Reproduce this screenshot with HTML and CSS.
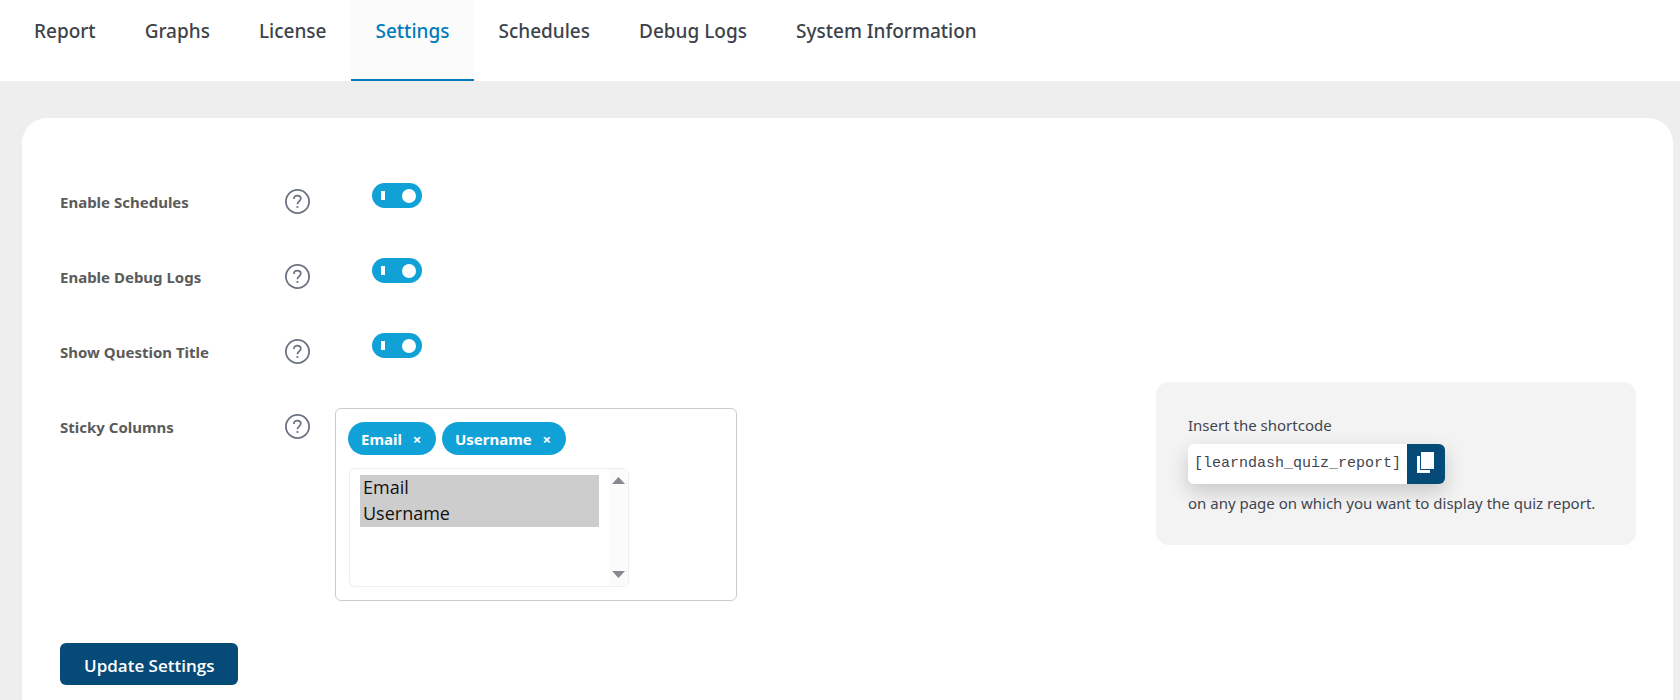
FILE: index.html
```html
<!DOCTYPE html>
<html lang="en">
<head>
<meta charset="utf-8">
<meta name="viewport" content="width=device-width, initial-scale=1">
<title>Quiz Report Settings</title>
<link rel="stylesheet" href="styles.css">
</head>
<body>
<svg class="sprite" aria-hidden="true">
  <symbol id="help" viewBox="0 0 25 25">
    <circle cx="12.5" cy="12.5" r="11.6" fill="none" stroke="#6b7280" stroke-width="1.800"/>
    <path d="M8.9 9.9C8.9 7.7 10.4 6.6 12.3 6.6c2 0 3.5 1.1 3.5 2.9 0 2.600-3.400 3-3.400 5.700" fill="none" stroke="#6b7280" stroke-width="1.700"/>
    <circle cx="12.400" cy="18" r="1.100" fill="#6b7280"/>
  </symbol>
</svg>
<nav class="tabs">
  <a class="tab" href="#report">Report</a>
  <a class="tab" href="#graphs">Graphs</a>
  <a class="tab" href="#license">License</a>
  <a class="tab tab-active" href="#settings" aria-current="page">Settings</a>
  <a class="tab" href="#schedules">Schedules</a>
  <a class="tab" href="#logs">Debug Logs</a>
  <a class="tab" href="#system">System Information</a>
</nav>
<main class="card">
  <form class="settings">
    <div class="row">
      <label class="label" for="schedules-on">Enable Schedules</label>
      <button class="help" type="button" aria-label="Help"><svg><use href="#help"/></svg></button>
      <input class="toggle" id="schedules-on" type="checkbox" checked>
    </div>
    <div class="row">
      <label class="label" for="logs-on">Enable Debug Logs</label>
      <button class="help" type="button" aria-label="Help"><svg><use href="#help"/></svg></button>
      <input class="toggle" id="logs-on" type="checkbox" checked>
    </div>
    <div class="row">
      <label class="label" for="title-on">Show Question Title</label>
      <button class="help" type="button" aria-label="Help"><svg><use href="#help"/></svg></button>
      <input class="toggle" id="title-on" type="checkbox" checked>
    </div>
    <div class="row">
      <label class="label" for="columns">Sticky Columns</label>
      <button class="help" type="button" aria-label="Help"><svg><use href="#help"/></svg></button>
      <div class="picker">
        <div class="pills">
          <span class="pill">Email <button class="remove" type="button" aria-label="Remove Email">×</button></span>
          <span class="pill">Username <button class="remove" type="button" aria-label="Remove Username">×</button></span>
        </div>
        <div class="listbox">
          <select class="list" id="columns" multiple size="4">
            <option selected>Email</option>
            <option selected>Username</option>
          </select>
          <div class="scrollbar" aria-hidden="true">
            <svg class="arrow" viewBox="0 0 13 7"><path d="M0 7 6.500 0 13 7z"/></svg>
            <svg class="arrow" viewBox="0 0 13 7"><path d="M0 0 6.500 7 13 0z"/></svg>
          </div>
        </div>
      </div>
    </div>
    <button class="submit" type="submit">Update Settings</button>
  </form>
  <aside class="shortcode">
    <p class="hint">Insert the shortcode</p>
    <div class="copybox">
      <code class="code">[learndash_quiz_report]</code>
      <button class="copy" type="button" aria-label="Copy shortcode">
        <svg class="copy-icon" viewBox="0 0 18 22"><path fill="#fff" d="M4 0h13v17H4zM0 4h3v14h10v3H0z"/></svg>
      </button>
    </div>
    <p class="hint">on any page on which you want to display the quiz report.</p>
  </aside>
</main>
</body>
</html>
```
FILE: styles.css
```css
* { box-sizing: border-box; }

body {
  margin: 0;
  background: #eeeeef;
  color: #3f4550;
  font: 15px/24px "Segoe UI", "Noto Sans", sans-serif;
}

.sprite { display: none; }
button { font-family: inherit; cursor: pointer; }

.tabs {
  display: flex;
  padding-left: 10px;
  background: #fff;
}

.tab {
  padding: 16px 25px 33px 24px;
  border-bottom: 2px solid transparent;
  color: #3c434a;
  font-size: 19px;
  font-weight: 500;
  line-height: 30px;
  text-decoration: none;
}

.tab-active {
  background: #fbfbfb;
  border-color: #007cba;
  color: #007cba;
}

.card {
  display: flex;
  justify-content: space-between;
  align-items: flex-start;
  margin: 37px 7px 0 22px;
  padding: 65px 37px 14px;
  min-height: calc(100vh - 118px);
  border-radius: 25px 25px 0 0;
  background: #fff;
}

.row {
  display: grid;
  grid-template-columns: 225px 51px auto;
  justify-content: start;
  align-items: start;
  min-height: 75px;
}

.label {
  padding: 7px 0 0 1px;
  color: #5b5b5b;
  font-weight: 700;
}

.help {
  width: 25px;
  height: 25px;
  margin: 6px 0 0 1px;
  padding: 0;
  border: 0;
  background: none;
}

.help svg { display: block; width: 25px; height: 25px; }

.toggle {
  display: flex;
  align-items: center;
  justify-content: space-between;
  appearance: none;
  width: 50px;
  height: 25px;
  margin: 0 0 0 37px;
  padding: 0 6px 0 9px;
  border-radius: 13px;
  background: #10a1d6;
}

.toggle::before {
  content: "";
  width: 4px;
  height: 9px;
  background: #fff;
}

.toggle::after {
  content: "";
  width: 14px;
  height: 14px;
  border-radius: 50%;
  background: #fff;
}

.picker {
  width: 402px;
  padding: 13px 12px;
  border: 1px solid #ccc;
  border-radius: 6px;
}

.pills { display: flex; gap: 6px; }

.pill {
  display: flex;
  align-items: center;
  gap: 8px;
  height: 33px;
  padding: 0 12px 0 13px;
  border-radius: 17px;
  background: #10a1d6;
  color: #fff;
  font-weight: 700;
}

.remove {
  width: 14px;
  padding: 0;
  border: 0;
  background: none;
  color: #fff;
  font-size: 15px;
  font-weight: 700;
}

.listbox {
  display: flex;
  width: 280px;
  height: 119px;
  margin: 13px 0 0 1px;
  border: 1px solid #eee;
  border-radius: 6px;
}

.list {
  flex: 1;
  height: 100%;
  margin: 0 10px;
  padding: 6px 0;
  border: 0;
  outline: 0;
  overflow: hidden;
  scrollbar-width: none;
  background: #fff;
  color: #111;
  font: 18px "Segoe UI", "Open Sans", sans-serif;
}

.list option {
  min-height: 26px;
  padding: 0 3px;
  line-height: 26px;
  color: #111;
}

.list option:checked {
  background: #cdcdcd linear-gradient(#cdcdcd, #cdcdcd);
  color: #111;
}

.scrollbar {
  display: flex;
  flex-direction: column;
  justify-content: space-between;
  align-items: center;
  width: 19px;
  padding: 8px 0;
  background: #fbfbfb;
}

.arrow { width: 13px; height: 7px; fill: #888890; }

.submit {
  height: 42px;
  margin: 42px 0 0 1px;
  padding: 2px 24px 0;
  border: 0;
  border-radius: 6px;
  background: #064b78;
  color: #fff;
  font-family: "Segoe UI", "Open Sans", sans-serif;
  font-size: 17px;
  font-weight: 600;
}

.shortcode {
  min-width: 480px;
  margin-top: 199px;
  padding: 31px 32px 30px;
  border-radius: 13px;
  background: #f3f3f3;
}

.hint { margin: 0; }

.copybox {
  display: flex;
  width: max-content;
  margin: 7px 0;
  border-radius: 6px;
  box-shadow: 0 8px 20px rgba(0, 0, 0, 0.18);
  overflow: hidden;
}

.code {
  padding: 8px 6px;
  background: #fff;
  font: 15px/24px "Liberation Mono", monospace;
}

.copy {
  display: flex;
  width: 38px;
  padding: 8px 10px;
  border: 0;
  background: #064b78;
}

.copy-icon { width: 18px; height: 22px; }
```
